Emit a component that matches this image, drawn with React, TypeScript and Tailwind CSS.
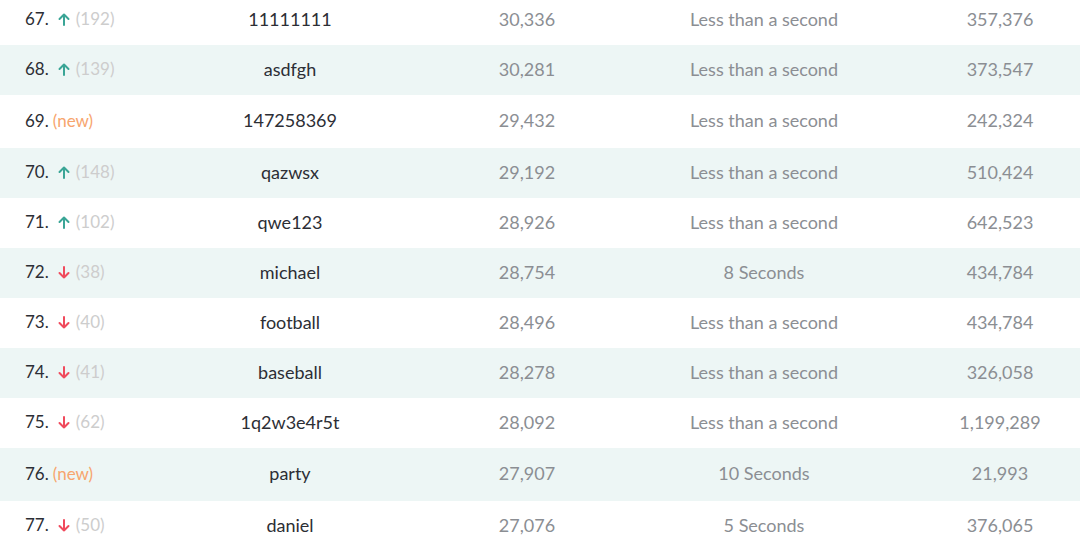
import React from 'react';

type Change = { kind: 'up' | 'down'; prev: number } | { kind: 'new' };

interface Row {
  rank: number;
  change: Change;
  password: string;
  count: string;
  crack: string;
  users: string;
}

const rows: Row[] = [
  { rank: 67, change: { kind: 'up', prev: 192 }, password: '11111111', count: '30,336', crack: 'Less than a second', users: '357,376' },
  { rank: 68, change: { kind: 'up', prev: 139 }, password: 'asdfgh', count: '30,281', crack: 'Less than a second', users: '373,547' },
  { rank: 69, change: { kind: 'new' }, password: '147258369', count: '29,432', crack: 'Less than a second', users: '242,324' },
  { rank: 70, change: { kind: 'up', prev: 148 }, password: 'qazwsx', count: '29,192', crack: 'Less than a second', users: '510,424' },
  { rank: 71, change: { kind: 'up', prev: 102 }, password: 'qwe123', count: '28,926', crack: 'Less than a second', users: '642,523' },
  { rank: 72, change: { kind: 'down', prev: 38 }, password: 'michael', count: '28,754', crack: '8 Seconds', users: '434,784' },
  { rank: 73, change: { kind: 'down', prev: 40 }, password: 'football', count: '28,496', crack: 'Less than a second', users: '434,784' },
  { rank: 74, change: { kind: 'down', prev: 41 }, password: 'baseball', count: '28,278', crack: 'Less than a second', users: '326,058' },
  { rank: 75, change: { kind: 'down', prev: 62 }, password: '1q2w3e4r5t', count: '28,092', crack: 'Less than a second', users: '1,199,289' },
  { rank: 76, change: { kind: 'new' }, password: 'party', count: '27,907', crack: '10 Seconds', users: '21,993' },
  { rank: 77, change: { kind: 'down', prev: 50 }, password: 'daniel', count: '27,076', crack: '5 Seconds', users: '376,065' },
];

const Arrow = ({ down }: { down?: boolean }) => (
  <svg
    width="12"
    height="13"
    viewBox="0 0 12 13"
    fill="none"
    stroke={down ? '#f04a5c' : '#3aa596'}
    strokeWidth="2"
    strokeLinecap="round"
    strokeLinejoin="round"
    className={down ? 'rotate-180' : ''}
  >
    <path d="M6 12V1.5M1.5 6L6 1.5L10.5 6" />
  </svg>
);

const RankCell = ({ row }: { row: Row }) => (
  <div className="flex items-center pl-[25px] text-[17px]">
    <span className="text-[#2c2e35]">{row.rank}.</span>
    {row.change.kind === 'new' ? (
      <span className="ml-[4px] text-[#f7a56e]">(new)</span>
    ) : (
      <>
        <span className="ml-[9px] mr-[6px] flex items-center">
          <Arrow down={row.change.kind === 'down'} />
        </span>
        <span className="text-[#cdcdcd]">({row.change.prev})</span>
      </>
    )}
  </div>
);

export default function App() {
  return (
    <div
      className="w-[1080px] h-[550px] overflow-hidden bg-white text-[18px]"
      style={{ fontFamily: 'Lato, "Noto Sans", sans-serif' }}
    >
      <div className="mt-[-5px]">
        {rows.map((row, i) => (
          <div
            key={row.rank}
            className={`grid grid-cols-[172px_236px_238px_236px_1fr] items-center pb-[2px] ${
              row.change.kind === 'new' ? 'h-[53px]' : 'h-[50px]'
            } ${i % 2 === 1 ? 'bg-[#edf6f5]' : 'bg-white'}`}
          >
            <RankCell row={row} />
            <div className="text-center text-[#2c2e35]">{row.password}</div>
            <div className="text-center text-[#8b8e93]">{row.count}</div>
            <div className="text-center text-[#8b8e93]">{row.crack}</div>
            <div className="pl-[38px] text-center text-[#8b8e93]">{row.users}</div>
          </div>
        ))}
      </div>
    </div>
  );
}
